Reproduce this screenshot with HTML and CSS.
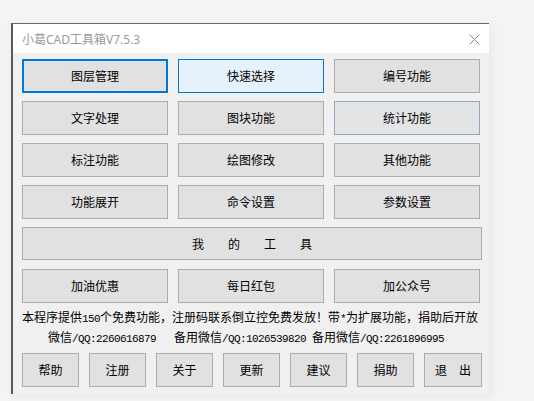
FILE: index.html
```html
<!DOCTYPE html>
<html lang="zh-CN">
<head>
<meta charset="utf-8">
<title>小葛CAD工具箱V7.5.3</title>
<link rel="stylesheet" href="styles.css">
</head>
<body>
<div class="window">
  <div class="titlebar">
    <span class="title">小葛CAD工具箱V7.5.3</span>
    <span class="close">
      <svg width="11" height="11" viewBox="0 0 11 11"><path d="M0.5 0.5 L10.5 10.5 M10.5 0.5 L0.5 10.5" stroke="#8a8a8a" stroke-width="1" fill="none"/></svg>
    </span>
  </div>
  <div class="content">
    <div class="grid">
      <button class="btn focus">图层管理</button>
      <button class="btn hover">快速选择</button>
      <button class="btn">编号功能</button>
      <button class="btn">文字处理</button>
      <button class="btn">图块功能</button>
      <button class="btn soft">统计功能</button>
      <button class="btn">标注功能</button>
      <button class="btn">绘图修改</button>
      <button class="btn">其他功能</button>
      <button class="btn">功能展开</button>
      <button class="btn">命令设置</button>
      <button class="btn">参数设置</button>
      <button class="btn wide">我　　的　　工　　具</button>
      <button class="btn">加油优惠</button>
      <button class="btn">每日红包</button>
      <button class="btn">加公众号</button>
    </div>
    <div class="notice">
      <p class="line">本程序提供<span class="mono">150</span>个免费功能，注册码联系倒立控免费发放！带<span class="mono">*</span>为扩展功能，捐助后开放</p>
      <p class="line second">微信<span class="mono">/QQ:2260616879&nbsp;&nbsp;&nbsp;</span>备用微信<span class="mono">/QQ:1026539820 </span>备用微信<span class="mono">/QQ:2261896995</span></p>
    </div>
    <div class="bottom">
      <button class="btn small">帮助</button>
      <button class="btn small">注册</button>
      <button class="btn small">关于</button>
      <button class="btn small">更新</button>
      <button class="btn small">建议</button>
      <button class="btn small">捐助</button>
      <button class="btn small last">退　出</button>
    </div>
  </div>
</div>
</body>
</html>
```

FILE: styles.css
```css
html, body {
  margin: 0;
  padding: 0;
}
body {
  background: #f4f4f4;
  width: 534px;
  height: 401px;
  overflow: hidden;
  padding-top: 23px;
  box-sizing: border-box;
  font-family: "Noto Sans CJK SC", sans-serif;
}
.window {
  margin-left: 11px;
  width: 478px;
  box-sizing: border-box;
  border-top: 1px solid #6a6a6a;
  border-left: 2px solid #5a5a5a;
  background: #f0f0f0;
  box-shadow: 2px 2px 10px rgba(0, 0, 0, 0.06);
}
.titlebar {
  height: 29px;
  background: #ffffff;
  display: flex;
  align-items: center;
  justify-content: space-between;
  padding: 0 9px 0 9px;
}
.title {
  font-family: "Noto Sans", "Noto Sans CJK SC", sans-serif;
  font-size: 12px;
  color: #9a9a9a;
  padding-top: 1px;
}
.close {
  display: flex;
  width: 11px;
  height: 11px;
  margin-top: 1px;
}
.content {
  padding: 6px 7px 7px 9px;
}
.grid {
  display: grid;
  grid-template-columns: 146px 146px 146px;
  column-gap: 10px;
  row-gap: 8px;
}
.btn {
  font-family: "Noto Sans CJK SC", sans-serif;
  font-size: 12px;
  color: #000;
  background: #e1e1e1;
  border: 1px solid #adadad;
  height: 34px;
  padding: 0;
  margin: 0;
  box-sizing: border-box;
  display: flex;
  align-items: center;
  justify-content: center;
  line-height: 1;
}
.btn.focus {
  border: 2px solid #0078d7;
}
.btn.hover {
  background: #e5f1fb;
  border-color: #0078d7;
}
.btn.soft {
  background: #e3e4e6;
  border-color: #93a8c0;
}
.btn.wide {
  grid-column: 1 / span 3;
  width: calc(100% + 2px);
  height: 33px;
  margin-bottom: 1px;
}
.notice {
  margin-top: 5px;
  padding-right: 6px;
  text-align: center;
  font-size: 12px;
  color: #000;
}
.line {
  margin: 0;
  line-height: 17px;
  white-space: nowrap;
}
.line.second {
  padding-right: 6px;
}
.mono {
  font-family: "Liberation Mono", "DejaVu Sans Mono", monospace;
  font-size: 11px;
  letter-spacing: -0.6px;
}
.bottom {
  margin-top: 5px;
  display: flex;
  gap: 10px;
}
.btn.small {
  width: 57px;
}
.btn.small.last {
  width: 58px;
}
```
